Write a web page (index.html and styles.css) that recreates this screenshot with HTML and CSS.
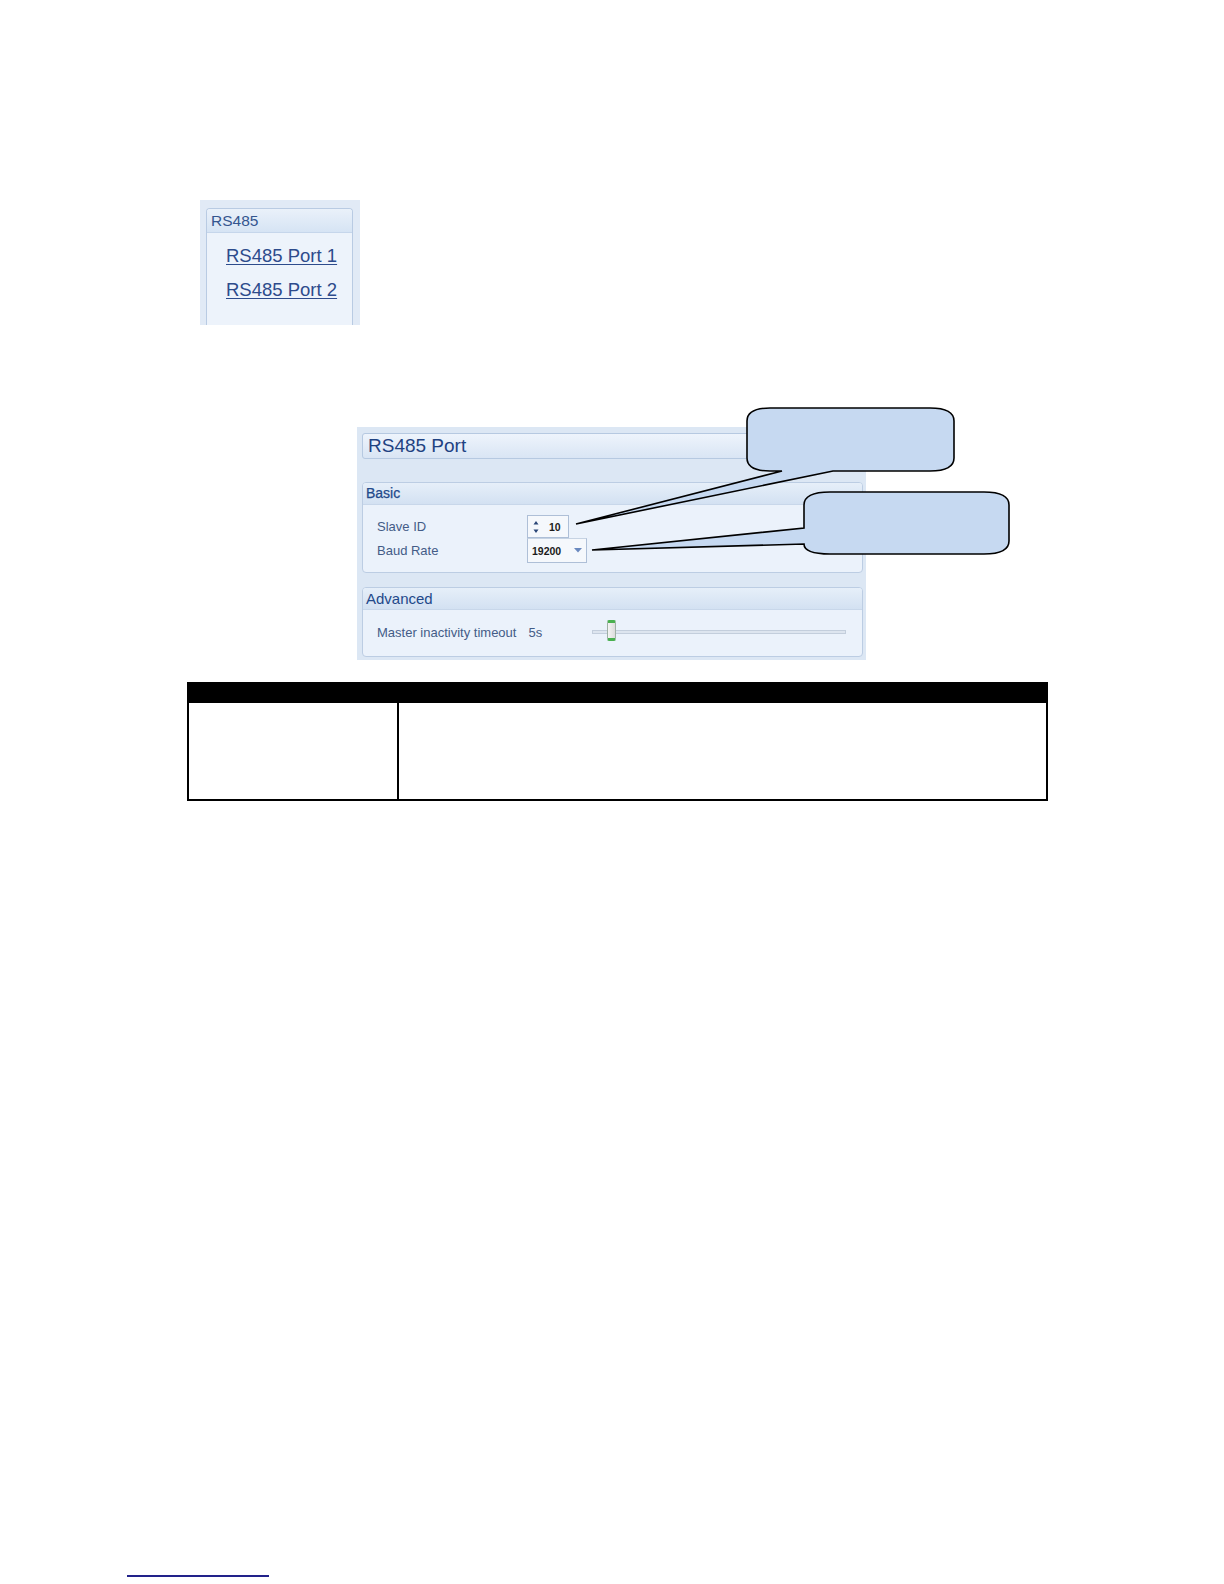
FILE: index.html
```html
<!DOCTYPE html>
<html lang="en">
<head>
<meta charset="utf-8">
<title>RS485 Port</title>
<link rel="stylesheet" href="styles.css">
</head>
<body>
<div class="page">
  <div class="nav-panel">
    <div class="nav-box">
      <div class="nav-head">RS485</div>
      <div class="nav-links">
        <a class="nav-link" href="#">RS485 Port 1</a>
        <a class="nav-link" href="#">RS485 Port 2</a>
      </div>
    </div>
  </div>

  <div class="port-panel">
    <div class="title-bar">RS485 Port</div>
    <section class="group group-basic">
      <div class="group-head head-basic">Basic</div>
      <div class="group-body">
        <div class="row row-spin">
          <span class="label">Slave ID</span>
          <div class="spinner">
            <span class="spin-arrows">
              <svg width="6" height="14" viewBox="0 0 6 14"><path d="M3 1 L5.5 4.5 H0.5 Z M0.5 9.5 H5.5 L3 13 Z" fill="#2a4677"/></svg>
            </span>
            <span class="spin-value">10</span>
          </div>
        </div>
        <div class="row row-drop">
          <span class="label">Baud Rate</span>
          <div class="dropdown">
            <span class="drop-value">19200</span>
            <svg class="drop-arrow" width="8" height="5" viewBox="0 0 8 5"><path d="M0 0 H8 L4 4.5 Z" fill="#6a89bf"/></svg>
          </div>
        </div>
      </div>
    </section>
    <section class="group group-adv">
      <div class="group-head head-adv">Advanced</div>
      <div class="group-body adv-body">
        <div class="row row-slider">
          <span class="label">Master inactivity timeout</span>
          <span class="label value">5s</span>
          <div class="slider">
            <span class="track"></span>
            <span class="thumb"></span>
          </div>
        </div>
      </div>
    </section>
  </div>

  <table class="info">
    <thead>
      <tr><th class="c1"></th><th class="c2"></th></tr>
    </thead>
    <tbody>
      <tr><td class="c1"></td><td class="c2"></td></tr>
    </tbody>
  </table>

  <div class="footnote-rule"></div>

  <svg class="callouts" width="1224" height="700" viewBox="0 0 1224 700">
    <path d="M770 408 H930 Q954 408 954 421 V458 Q954 471 930 471 H833 L576 524 L782 471 H770 Q747 471 747 458 V421 Q747 408 770 408 Z" fill="#c6d9f1" stroke="#000" stroke-width="1.6" stroke-linejoin="miter"/>
    <path d="M830 492 H984 Q1009 492 1009 505 V541 Q1009 554 984 554 H830 Q804 554 804 544 L592 550 L804 528 V505 Q804 492 830 492 Z" fill="#c6d9f1" stroke="#000" stroke-width="1.6" stroke-linejoin="miter"/>
  </svg>
</div>
</body>
</html>
```

FILE: styles.css
```css
html, body {
  margin: 0;
  padding: 0;
  background: #ffffff;
}

body {
  font-family: "Liberation Sans", Arial, sans-serif;
}

.page {
  position: relative;
  width: 1224px;
  padding-top: 200px;
  padding-bottom: 7px;
}

/* ---------- navigation panel ---------- */
.nav-panel {
  margin-left: 200px;
  width: 160px;
  height: 125px;
  box-sizing: border-box;
  padding: 8px 7px 0 6px;
  background: #e1eaf6;
}

.nav-box {
  height: 100%;
  box-sizing: border-box;
  border: 1px solid #b9cbe3;
  border-bottom: none;
  border-radius: 4px 4px 0 0;
  background: #edf3fb;
}

.nav-head {
  height: 23px;
  border-bottom: 1px solid #c6d6eb;
  background: linear-gradient(#eaf1fa, #d6e4f4);
  border-radius: 3px 3px 0 0;
  padding-left: 4px;
  font-size: 15.5px;
  line-height: 23px;
  color: #34558f;
}

.nav-links {
  display: flex;
  flex-direction: column;
  padding: 6px 0 0 19px;
}

.nav-link {
  font-size: 18.5px;
  line-height: 34px;
  color: #2d4b8c;
  text-decoration: underline;
  text-underline-offset: 2px;
}

/* ---------- port panel ---------- */
.port-panel {
  margin-top: 102px;
  margin-left: 357px;
  width: 509px;
  height: 233px;
  box-sizing: border-box;
  padding: 6px 3px 0 5px;
  background: #dce7f4;
}

.title-bar {
  height: 26px;
  box-sizing: border-box;
  border: 1px solid #b6c9e1;
  border-radius: 3px;
  background: linear-gradient(#eef4fc, #d9e5f4);
  padding-left: 5px;
  font-size: 19px;
  line-height: 24px;
  color: #1f4282;
}

.group {
  box-sizing: border-box;
  border: 1px solid #bccde3;
  border-radius: 4px;
  background: #ebf2fb;
  overflow: hidden;
}

.group-basic {
  margin-top: 23px;
  height: 91px;
}

.group-adv {
  margin-top: 14px;
  height: 70px;
}

.group-head {
  height: 21px;
  border-bottom: 1px solid #c8d7ea;
  background: linear-gradient(#e6eff9, #d3e1f2);
  padding-left: 3px;
  line-height: 21px;
  color: #23498a;
}

.head-basic {
  font-size: 14px;
  -webkit-text-stroke: 0.25px #23498a;
}

.head-adv {
  font-size: 15px;
}

.group-body {
  padding: 10px 0 0 14px;
}

.adv-body {
  padding-top: 11px;
}

.row {
  display: flex;
  align-items: center;
}

.row-spin {
  height: 23px;
}

.row-drop {
  height: 25px;
}

.row-slider {
  height: 22px;
}

.label {
  font-size: 13px;
  color: #435c87;
}

.row-spin .label,
.row-drop .label {
  width: 150px;
}

.value {
  margin-left: 12px;
}

.spinner {
  width: 42px;
  height: 23px;
  box-sizing: border-box;
  border: 1px solid #aebfd7;
  background: #f5f8fc;
  display: flex;
  align-items: center;
}

.spin-arrows {
  display: flex;
  margin-left: 5px;
  width: 6px;
}

.spin-value {
  margin-left: 10px;
  font-size: 10.5px;
  font-weight: bold;
  color: #1b1b1b;
}

.dropdown {
  width: 60px;
  height: 25px;
  box-sizing: border-box;
  border: 1px solid #aebfd7;
  border-top-color: #c6d3e3;
  background: #f5f8fc;
  display: flex;
  align-items: center;
}

.drop-value {
  margin-left: 4px;
  font-size: 10.5px;
  font-weight: bold;
  color: #1b1b1b;
}

.drop-arrow {
  margin-left: 13px;
}

.slider {
  position: relative;
  margin-left: 50px;
  width: 254px;
  height: 22px;
}

.track {
  position: absolute;
  left: 0;
  right: 0;
  top: 9px;
  height: 2px;
  border: 1px solid #c3cedc;
  background: #dde5ef;
}

.thumb {
  position: absolute;
  left: 15px;
  top: -1px;
  width: 9px;
  height: 21px;
  box-sizing: border-box;
  border: 1px solid #9fb0a5;
  border-top: 3px solid #49b04f;
  border-bottom: 3px solid #49b04f;
  border-radius: 2px;
  background: linear-gradient(90deg, #f4f4f4, #dcdcdc);
}

/* ---------- info table ---------- */
.info {
  margin-top: 22px;
  margin-left: 187px;
  width: 861px;
  border: 2px solid #000;
  border-spacing: 0;
  table-layout: fixed;
}

.info th {
  height: 19px;
  padding: 0;
  background: #000;
}

.info td {
  height: 96px;
  padding: 0;
  background: #fff;
}

.info .c1 {
  width: 210px;
}

.info td.c1 {
  border-right: 2px solid #000;
}

.footnote-rule {
  margin-top: 774px;
  margin-left: 127px;
  width: 142px;
  height: 2px;
  background: #22228a;
}

.callouts {
  position: absolute;
  left: 0;
  top: 0;
  pointer-events: none;
}
```
